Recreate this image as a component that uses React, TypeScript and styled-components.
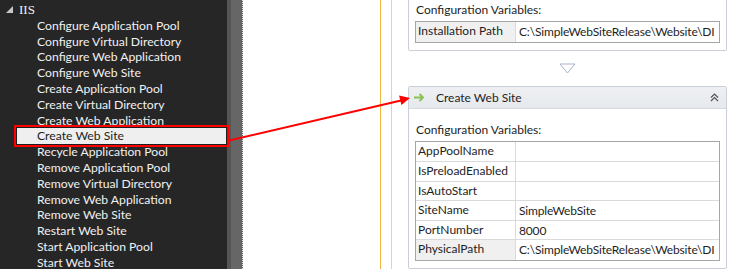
import React from "react";
import styled, {createGlobalStyle} from "styled-components";

const Global = createGlobalStyle`
  html, body {
    margin: 0;
    padding: 0;
    width: 730px;
    height: 269px;
    overflow: hidden;
    background: #ffffff;
  }
  body {
    font-family: "Lato", "Liberation Sans", sans-serif;
    font-size: 12px;
  }
`

const actions = [
    "Configure Application Pool",
    "Configure Virtual Directory",
    "Configure Web Application",
    "Configure Web Site",
    "Create Application Pool",
    "Create Virtual Directory",
    "Create Web Application",
    "Create Web Site",
    "Recycle Application Pool",
    "Remove Application Pool",
    "Remove Virtual Directory",
    "Remove Web Application",
    "Remove Web Site",
    "Restart Web Site",
    "Start Application Pool",
    "Start Web Site",
]

const siteVars = [
    {name: "AppPoolName", value: ""},
    {name: "IsPreloadEnabled", value: ""},
    {name: "IsAutoStart", value: ""},
    {name: "SiteName", value: "SimpleWebSite"},
    {name: "PortNumber", value: "8000"},
    {name: "PhysicalPath", value: "C:\\SimpleWebSiteRelease\\Website\\DI", shaded: true},
]

export default function App() {
    return (
        <Page>
            <Global/>
            <Toolbox>
                <GroupRow>
                    <Expander viewBox="0 0 7 7"><polygon points="7,0 7,7 0,7"/></Expander>
                    <GroupName>IIS</GroupName>
                </GroupRow>
                {actions.map((a) => (
                    <ItemRow key={a} selected={a === "Create Web Site"}>{a}</ItemRow>
                ))}
            </Toolbox>
            <Scrollbar/>
            <Canvas>
                <SequenceGutter/>
                <SequenceRail/>
                <Flow>
                    <Card open>
                        <CardBody first>
                            <VarsLabel>Configuration Variables:</VarsLabel>
                            <VarTable>
                                <VarRow>
                                    <VarName shaded>Installation Path</VarName>
                                    <VarValue>C:\SimpleWebSiteRelease\Website\DI</VarValue>
                                </VarRow>
                            </VarTable>
                        </CardBody>
                    </Card>
                    <Connector>
                        <svg width="17" height="11" viewBox="0 0 17 11">
                            <polygon points="1,1 16,1 8.5,10" fill="none" stroke="#a9b4c6" strokeWidth="1"/>
                        </svg>
                    </Connector>
                    <Card>
                        <CardHeader>
                            <svg width="12" height="9" viewBox="0 0 12 9">
                                <path d="M1 4.5 H10 M6.5 1 L10 4.5 L6.5 8" fill="none" stroke="#8dc154" strokeWidth="2"/>
                            </svg>
                            <CardTitle>Create Web Site</CardTitle>
                            <Collapse width="9" height="9" viewBox="0 0 9 9">
                                <path d="M1 4.5 L4.5 1 L8 4.5 M1 8 L4.5 4.5 L8 8" fill="none" stroke="#555" strokeWidth="1.2"/>
                            </Collapse>
                        </CardHeader>
                        <CardBody>
                            <VarsLabel>Configuration Variables:</VarsLabel>
                            <VarTable>
                                {siteVars.map((v) => (
                                    <VarRow key={v.name}>
                                        <VarName shaded={v.shaded}>{v.name}</VarName>
                                        <VarValue>{v.value}</VarValue>
                                    </VarRow>
                                ))}
                            </VarTable>
                        </CardBody>
                    </Card>
                </Flow>
            </Canvas>
            <Callout viewBox="0 0 730 269">
                <line x1="229" y1="140.5" x2="401" y2="100.5" stroke="#ff0000" strokeWidth="2"/>
                <polygon points="410,98 401.4,105.1 399.1,95.4" fill="#ff0000"/>
            </Callout>
        </Page>
    )
}

const Page = styled.div`
  position: relative;
  display: flex;
  width: 730px;
  height: 269px;
  overflow: hidden;
`

const Toolbox = styled.div`
  width: 227px;
  flex: none;
  background: #262626;
  padding-top: 2px;
  box-sizing: border-box;
`

const GroupRow = styled.div`
  display: flex;
  align-items: center;
  height: 15.8px;
  padding-left: 6px;
  color: #f1f1f1;
`

const Expander = styled.svg`
  width: 7px;
  height: 7px;
  fill: #c8c8c8;
  margin-right: 6px;
`

const GroupName = styled.span`
  font-family: "Liberation Serif", serif;
  font-size: 13px;
`

const ItemRow = styled.div<{ selected?: boolean }>`
  height: 15.8px;
  line-height: 15.8px;
  margin-left: 17px;
  width: 209px;
  padding-left: 20px;
  box-sizing: border-box;
  white-space: nowrap;
  font-size: 12.2px;
  color: ${p => p.selected ? "#1e1e1e" : "#f1f1f1"};
  background: ${p => p.selected ? "#efefef" : "transparent"};
  box-shadow: ${p => p.selected ? "0 0 0 1px #1e1e1e, 0 0 0 3px #ff0000" : "none"};
  position: relative;
  z-index: ${p => p.selected ? 1 : 0};
`

const Scrollbar = styled.div`
  width: 16px;
  flex: none;
  background: #666666;
  border-left: 4px solid #555555;
  border-right: 1px dotted #e0e0e0;
  box-sizing: border-box;
`

const Canvas = styled.div`
  flex: 1;
  display: flex;
  background: #ffffff;
  padding-left: 137px;
`

const SequenceGutter = styled.div`
  width: 11px;
  flex: none;
  border-left: 1px solid #efb53e;
  box-sizing: border-box;
`

const SequenceRail = styled.div`
  width: 17px;
  flex: none;
  border-left: 1px solid #d3d3db;
  box-sizing: border-box;
`

const Flow = styled.div`
  width: 319px;
  flex: none;
  display: flex;
  flex-direction: column;
`

const Card = styled.div<{ open?: boolean }>`
  border: 1px solid #c9ced8;
  border-top: ${p => p.open ? "none" : "1px solid #c9ced8"};
  border-radius: ${p => p.open ? "0 0 2px 2px" : "2px"};
  background: #ffffff;
`

const CardHeader = styled.div`
  display: flex;
  align-items: center;
  height: 21px;
  padding: 0 7px 0 4px;
  background: linear-gradient(#eef0f3, #e6e9ed);
  border-bottom: 1px solid #d5d9e0;
  color: #1e1e1e;
`

const CardTitle = styled.span`
  flex: 1;
  margin-left: 11px;
`

const Collapse = styled.svg`
  flex: none;
`

const CardBody = styled.div<{ first?: boolean }>`
  padding: ${p => p.first ? "2px 6px 7px 6px" : "13px 6px 7px 6px"};
`

const VarsLabel = styled.div`
  color: #1e1e1e;
  height: 16px;
  line-height: 16px;
  padding-left: 1px;
  margin-bottom: 3px;
`

const VarTable = styled.div`
  border: 1px solid #a6a6a6;
  display: flex;
  flex-direction: column;
`

const VarRow = styled.div`
  display: grid;
  grid-template-columns: 100px 1fr;
  height: 19.6px;
  border-bottom: 1px solid #dadada;
  box-sizing: border-box;

  &:last-child {
    border-bottom: none;
  }
`

const VarName = styled.div<{ shaded?: boolean }>`
  padding-left: 2px;
  line-height: 18px;
  color: #1e1e1e;
  background: ${p => p.shaded ? "#f0f0f0" : "#ffffff"};
  border-right: 1px solid #dadada;
  white-space: nowrap;
`

const VarValue = styled.div`
  padding-left: 3px;
  line-height: 19px;
  color: #1e1e1e;
  white-space: nowrap;
  letter-spacing: -0.15px;
  overflow: hidden;
`

const Connector = styled.div`
  height: 39px;
  display: flex;
  justify-content: center;
  align-items: center;
`

const Callout = styled.svg`
  position: absolute;
  left: 0;
  top: 0;
  width: 730px;
  height: 269px;
  pointer-events: none;
  z-index: 5;
`
